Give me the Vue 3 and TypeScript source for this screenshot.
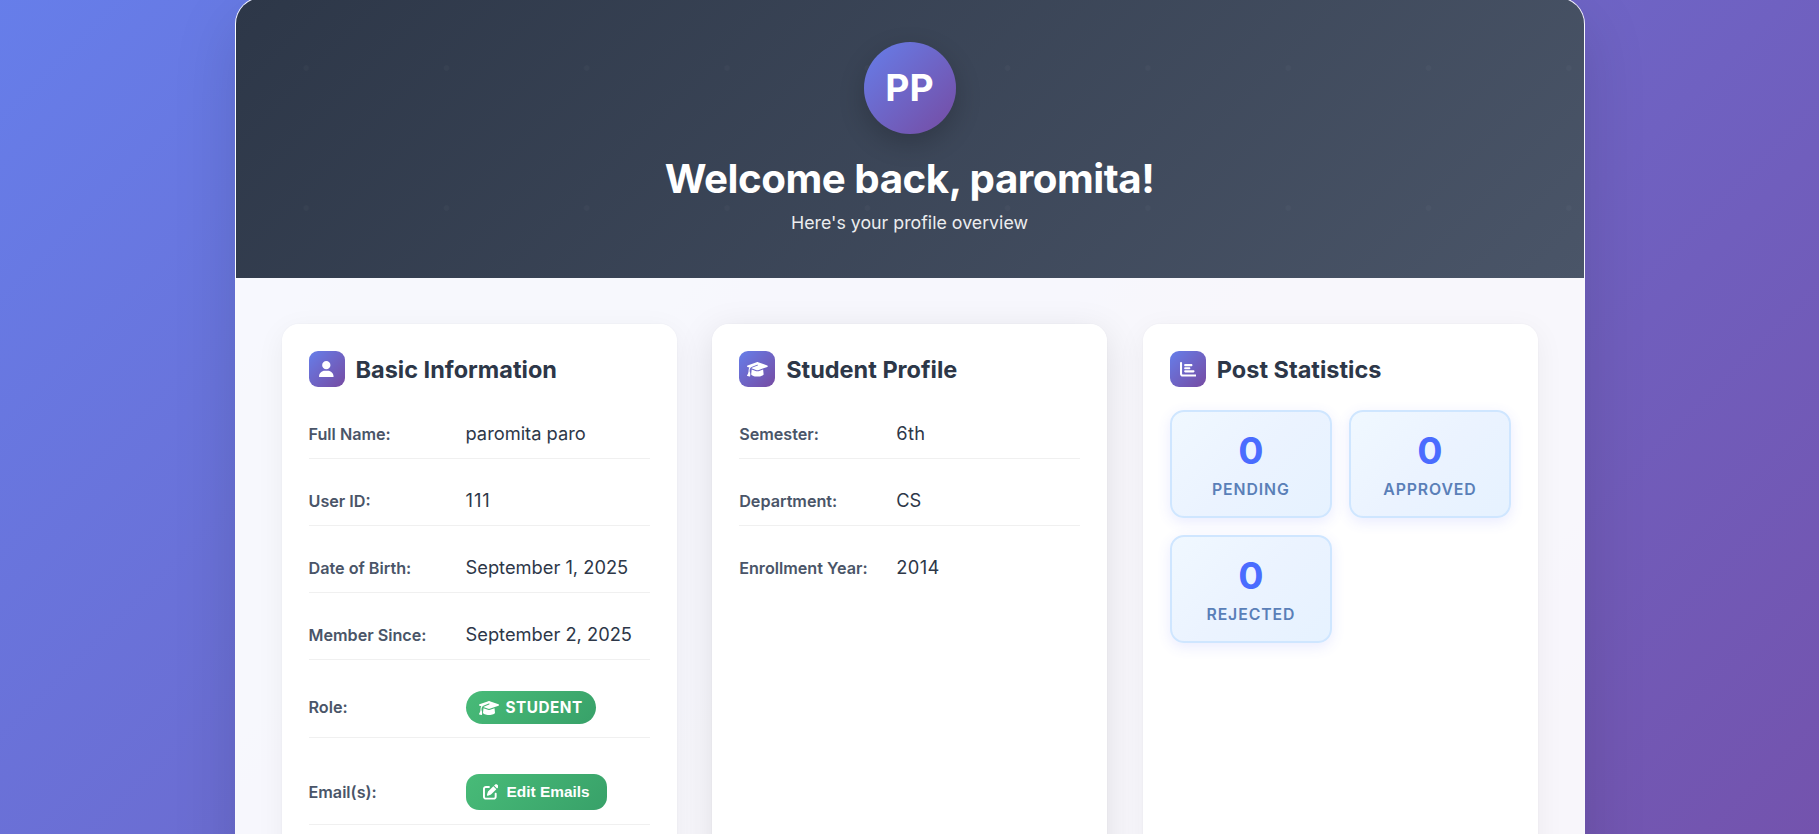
<script setup lang="ts">
interface Field {
  label: string
  value: string
  spacing?: 'wide' | 'slight'
}

const basicFields: Field[] = [
  { label: 'Full Name:', value: 'paromita paro' },
  { label: 'User ID:', value: '111', spacing: 'wide' },
  { label: 'Date of Birth:', value: 'September 1, 2025' },
  { label: 'Member Since:', value: 'September 2, 2025' }
]

const studentFields: Field[] = [
  { label: 'Semester:', value: '6th', spacing: 'slight' },
  { label: 'Department:', value: 'CS' },
  { label: 'Enrollment Year:', value: '2014', spacing: 'slight' }
]

const stats = [
  { label: 'Pending', count: 0 },
  { label: 'Approved', count: 0 },
  { label: 'Rejected', count: 0 }
]

const capPath =
  'M320 32c-8.1 0-16.1 1.4-23.7 4.1L15.8 137.4C6.3 140.9 0 149.9 0 160s6.3 19.1 15.8 22.6l57.9 20.9C57.3 229.3 48 259.8 48 291.9v28.1c0 28.4-10.8 57.7-22.3 80.8c-6.5 13-13.9 25.8-22.5 37.6C0 442.7-.9 448.3 .9 453.4s6 8.9 11.2 10.2l64 16c4.2 1.1 8.7 .3 12.4-2s6.3-6.1 7.1-10.4c8.6-42.8 4.3-81.2-2.1-108.7C90.3 344.3 86 329.8 80 316.5V291.9c0-30.2 10.2-58.7 27.9-81.5c12.9-15.5 29.6-28 49.2-35.7l157-61.7c8.2-3.2 17.5 .8 20.7 9s-.8 17.5-9 20.7l-157 61.7c-12.4 4.9-23.3 12.4-32.2 21.6l159.6 57.6c7.6 2.7 15.6 4.1 23.7 4.1s16.1-1.4 23.7-4.1L624.2 182.6c9.5-3.4 15.8-12.5 15.8-22.6s-6.3-19.1-15.8-22.6L343.7 36.1C336.1 33.4 328.1 32 320 32zM128 408c0 35.3 86 72 192 72s192-36.7 192-72L496.7 262.6 354.5 314c-11.1 4-22.8 6-34.5 6s-23.5-2-34.5-6L143.3 262.6 128 408z'
</script>

<template>
  <div class="page">
    <main class="container">
      <header class="hero">
        <div class="avatar">PP</div>
        <h1>Welcome back, paromita!</h1>
        <p>Here's your profile overview</p>
      </header>

      <div class="cards">
        <section class="card">
          <h2>
            <span class="icon">
              <svg width="14.6" height="16.6" viewBox="0 0 448 512"><path d="M224 256A128 128 0 1 0 224 0a128 128 0 1 0 0 256zm-45.7 48C79.8 304 0 383.8 0 482.3C0 498.7 13.3 512 29.7 512H418.3c16.4 0 29.7-13.3 29.7-29.7C448 383.8 368.2 304 269.7 304H178.3z" /></svg>
            </span>
            Basic Information
          </h2>
          <div v-for="f in basicFields" :key="f.label" class="row">
            <span class="label">{{ f.label }}</span>
            <span class="value" :class="f.spacing">{{ f.value }}</span>
          </div>
          <div class="row role">
            <span class="label">Role:</span>
            <span class="badge">
              <svg width="20" height="16" viewBox="0 0 640 512"><path :d="capPath" /></svg>
              STUDENT
            </span>
          </div>
          <div class="row emails">
            <span class="label">Email(s):</span>
            <button class="edit" type="button">
              <svg width="15.6" height="15.6" viewBox="0 0 512 512"><path d="M471.6 21.7c-21.9-21.9-57.3-21.9-79.2 0L362.3 51.7l97.9 97.9 30.1-30.1c21.9-21.9 21.9-57.3 0-79.2L471.6 21.7zm-299.2 220c-6.1 6.1-10.8 13.6-13.5 21.9l-29.6 88.8c-2.9 8.6-.6 18.1 5.8 24.6s15.9 8.7 24.6 5.8l88.8-29.6c8.2-2.7 15.7-7.4 21.9-13.5L437.7 172.3 339.7 74.3 172.4 241.7zM96 64C43 64 0 107 0 160V416c0 53 43 96 96 96H352c53 0 96-43 96-96V320c0-17.7-14.3-32-32-32s-32 14.3-32 32v96c0 17.7-14.3 32-32 32H96c-17.7 0-32-14.3-32-32V160c0-17.7 14.3-32 32-32h96c17.7 0 32-14.3 32-32s-14.3-32-32-32H96z" /></svg>
              Edit Emails
            </button>
          </div>
        </section>

        <section class="card raised">
          <h2>
            <span class="icon">
              <svg width="20.8" height="16.6" viewBox="0 0 640 512"><path :d="capPath" /></svg>
            </span>
            Student Profile
          </h2>
          <div v-for="f in studentFields" :key="f.label" class="row">
            <span class="label">{{ f.label }}</span>
            <span class="value" :class="f.spacing">{{ f.value }}</span>
          </div>
        </section>

        <section class="card">
          <h2>
            <span class="icon">
              <svg width="16.6" height="16.6" viewBox="0 0 512 512"><path d="M32 32c17.7 0 32 14.3 32 32V400c0 8.8 7.2 16 16 16H480c17.7 0 32 14.3 32 32s-14.3 32-32 32H80c-44.2 0-80-35.8-80-80V64C0 46.3 14.3 32 32 32zm96 96c0-17.7 14.3-32 32-32H352c17.7 0 32 14.3 32 32s-14.3 32-32 32H160c-17.7 0-32-14.3-32-32zm32 64H288c17.7 0 32 14.3 32 32s-14.3 32-32 32H160c-17.7 0-32-14.3-32-32s14.3-32 32-32zm0 96H416c17.7 0 32 14.3 32 32s-14.3 32-32 32H160c-17.7 0-32-14.3-32-32s14.3-32 32-32z" /></svg>
            </span>
            Post Statistics
          </h2>
          <div class="stats">
            <div v-for="s in stats" :key="s.label" class="stat">
              <strong>{{ s.count }}</strong>
              <span>{{ s.label }}</span>
            </div>
          </div>
        </section>
      </div>
    </main>
  </div>
</template>

<style>
body {
  margin: 0;
}
</style>

<style scoped>
.page {
  box-sizing: border-box;
  height: 834px;
  overflow: hidden;
  display: flex;
  justify-content: center;
  background: linear-gradient(135deg, #667eea 0%, #764ba2 100%) 0 -20px / 100% 1350px no-repeat;
  font-family: Inter, 'Liberation Sans', sans-serif;
  color: #2d3748;
}

.container {
  box-sizing: border-box;
  flex: none;
  width: 1350px;
  height: 1200px;
  margin-top: -3px;
  border: 1px solid rgba(255, 255, 255, 0.96);
  border-radius: 27px;
  overflow: hidden;
  background: rgba(255, 255, 255, 0.95);
  background-clip: padding-box;
  box-shadow: 0 22px 64px rgba(0, 0, 0, 0.13);
}

.hero {
  box-sizing: border-box;
  height: 280px;
  padding-top: 44px;
  display: flex;
  flex-direction: column;
  align-items: center;
  color: #fff;
  background:
    radial-gradient(circle, rgba(255, 255, 255, 0.022) 2.4px, transparent 3.2px) 0 0 / 140.3px 140px,
    linear-gradient(135deg, #2d3748 0%, #4a5568 100%);
}

.avatar {
  box-sizing: border-box;
  width: 92px;
  height: 92px;
  border-radius: 50%;
  display: flex;
  align-items: center;
  justify-content: center;
  background: linear-gradient(135deg, #667eea, #764ba2);
  box-shadow: 0 9px 27px rgba(0, 0, 0, 0.2);
  font-size: 37.3px;
  line-height: 44px;
  font-weight: 700;
}

h1 {
  margin: 21px 0 0;
  font-size: 40.3px;
  line-height: 48px;
  font-weight: 700;
  letter-spacing: -0.47px;
}

.hero p {
  margin: 7px 0 0;
  font-size: 17.8px;
  line-height: 26px;
  opacity: 0.9;
}

.cards {
  height: 920px;
  box-sizing: border-box;
  padding: 45px 44.5px 45px 45px;
  display: grid;
  grid-template-columns: repeat(3, 1fr);
  gap: 33.5px;
}

.card {
  box-sizing: border-box;
  padding: 27px;
  border: 1px solid rgba(0, 0, 0, 0.012);
  border-radius: 18px;
  background: #fff;
  background-clip: padding-box;
  box-shadow: 0 7px 29px rgba(0, 0, 0, 0.05);
}

.card.raised {
  box-shadow: 0 9px 36px rgba(0, 0, 0, 0.1);
}

h2 {
  display: flex;
  align-items: center;
  gap: 11px;
  height: 36px;
  margin: 0 0 23px;
  font-size: 23.5px;
  font-weight: 700;
}

.icon {
  width: 36px;
  height: 36px;
  border-radius: 9px;
  display: flex;
  align-items: center;
  justify-content: center;
  background: linear-gradient(135deg, #667eea, #764ba2);
}

svg {
  display: block;
  flex: none;
  fill: #fff;
}

.row {
  box-sizing: border-box;
  height: 49px;
  margin-bottom: 18px;
  display: flex;
  align-items: center;
  border-bottom: 1px solid #f0f0f0;
}

.row:last-child {
  border-bottom-color: transparent;
}

.row.role {
  height: 60px;
}

.row.role .label {
  padding-bottom: 1px;
}

.row.emails {
  height: 69px;
  padding-top: 4px;
  border-bottom-color: #f0f0f0;
}

.label {
  width: 157px;
  font-size: 16.18px;
  font-weight: 600;
  color: #4a5568;
}

.value {
  padding-bottom: 2px;
  font-size: 18.3px;
}

.value.wide {
  letter-spacing: 1px;
}

.value.slight {
  letter-spacing: 0.4px;
}

.badge {
  box-sizing: border-box;
  height: 33px;
  width: 130px;
  padding-left: 13px;
  display: flex;
  align-items: center;
  gap: 7px;
  border-radius: 18px;
  background: linear-gradient(135deg, #48bb78, #38a169);
  color: #fff;
  font-size: 15.3px;
  font-weight: 700;
  letter-spacing: 0.5px;
}

.edit {
  box-sizing: border-box;
  width: 141px;
  height: 36px;
  padding: 0 0 0 17px;
  border: 0;
  border-radius: 13px;
  display: flex;
  align-items: center;
  gap: 8.5px;
  background: linear-gradient(135deg, #48bb78, #38a169);
  color: #fff;
  font: 700 15.4px 'Liberation Sans', Arial, sans-serif;
}

.stats {
  display: grid;
  grid-template-columns: 1fr 1fr;
  gap: 17px;
}

.stat {
  box-sizing: border-box;
  height: 108px;
  padding-top: 17px;
  display: flex;
  flex-direction: column;
  align-items: center;
  border: 2px solid #cfe6ff;
  border-radius: 14px;
  background: linear-gradient(135deg, #f0f8ff, #ebf3ff 50%, #e6f2ff);
  box-shadow: 0 4px 14px rgba(74, 88, 255, 0.12);
}

.stat strong {
  font-size: 37.5px;
  line-height: 44px;
  font-weight: 700;
  color: #4a6cff;
}

.stat span {
  margin-top: 7px;
  font-size: 15.8px;
  line-height: 20px;
  font-weight: 600;
  letter-spacing: 0.9px;
  text-transform: uppercase;
  color: #5a7fb8;
}
</style>
